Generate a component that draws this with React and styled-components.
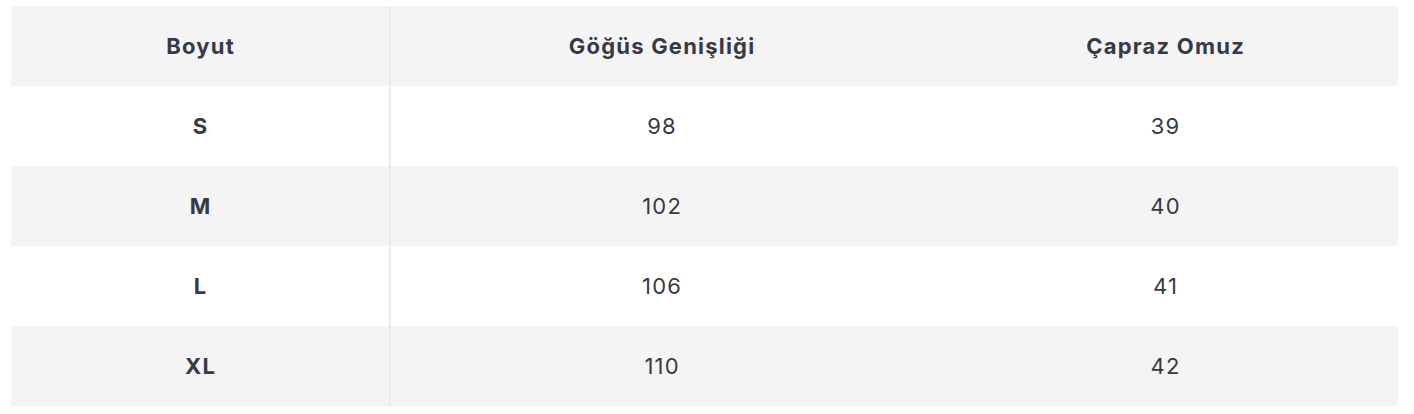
import React from "react";
import styled, { createGlobalStyle } from "styled-components";

const Global = createGlobalStyle`
  html, body { margin: 0; padding: 0; background: #ffffff; }
  body { font-family: Inter, "Noto Sans", sans-serif; }
`;

const Wrap = styled.div`
  padding: 6px 16px 8px 11px;
`;

const Table = styled.table`
  width: 1387px;
  border-collapse: collapse;
  table-layout: fixed;
  color: #363a46;
  font-size: 22px;
  letter-spacing: 1.2px;
`;

const Row = styled.tr`
  height: 80px;
  background: ${(p) => (p.$shade ? "#f4f4f4" : "#ffffff")};
`;

const Head = styled.th`
  font-weight: 650;
  text-align: center;
  vertical-align: middle;
  padding: 0 0 0 1.2px;
  border-right: ${(p) => (p.$divider ? "2px solid #ebebeb" : "none")};
`;

const Cell = styled.td`
  font-weight: ${(p) => (p.$strong ? 650 : 400)};
  text-align: center;
  vertical-align: middle;
  padding: 0 0 0 1.2px;
  border-right: ${(p) => (p.$divider ? "2px solid #ebebeb" : "none")};
`;

const rows = [
  ["S", "98", "39"],
  ["M", "102", "40"],
  ["L", "106", "41"],
  ["XL", "110", "42"],
];

export default function App() {
  return (
    <>
      <Global />
      <Wrap>
        <Table>
          <colgroup>
            <col style={{ width: 379 }} />
            <col style={{ width: 542 }} />
            <col style={{ width: 466 }} />
          </colgroup>
          <thead>
            <Row $shade>
              <Head $divider>Boyut</Head>
              <Head>Göğüs Genişliği</Head>
              <Head>Çapraz Omuz</Head>
            </Row>
          </thead>
          <tbody>
            {rows.map((r, i) => (
              <Row key={r[0]} $shade={i % 2 === 1}>
                <Cell $strong $divider>{r[0]}</Cell>
                <Cell>{r[1]}</Cell>
                <Cell>{r[2]}</Cell>
              </Row>
            ))}
          </tbody>
        </Table>
      </Wrap>
    </>
  );
}
